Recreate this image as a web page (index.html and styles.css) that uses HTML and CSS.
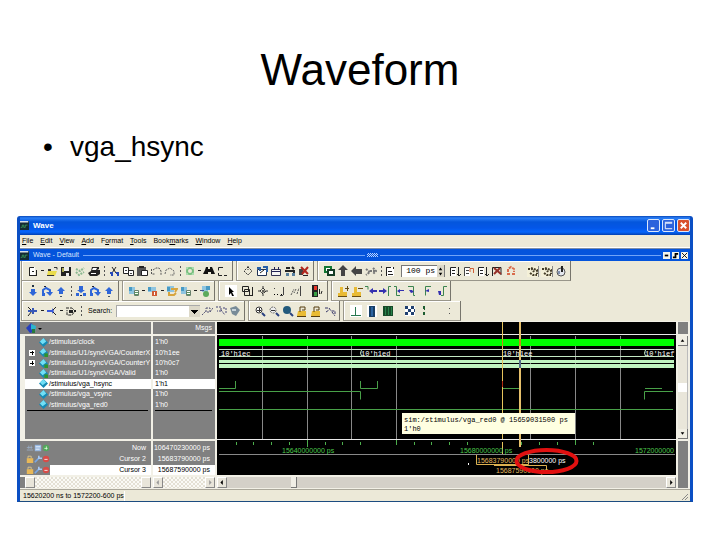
FILE: index.html
```html
<!DOCTYPE html>
<html lang="en">
<head>
<meta charset="utf-8">
<title>Waveform</title>
<link rel="stylesheet" href="styles.css">
</head>
<body>
<svg class="defs" aria-hidden="true">
<symbol id="new" viewBox="0 0 12 12"><path fill="#fff" d="M2 2h6v9H2z"/><path fill="none" stroke="#222" d="M2.500 11V2.500H7M9.500 5v6M3 10.500h6M5 6.500h2"/></symbol>
<symbol id="open" viewBox="0 0 12 12"><path fill="#eadc4c" d="M2 6h9l-2 5H1z"/><path fill="none" stroke="#333" d="M1 10.500h7M8 2.500h3v2"/><path fill="#333" d="M2 4h3v2H2z"/></symbol>
<symbol id="save" viewBox="0 0 12 12"><path fill="#222" d="M1 2h10v9H1z"/><path fill="#a8a850" d="M2 3h2v4H2z"/><path fill="#eee" d="M4 2h5v4H4zM6 8h3v3H6z"/></symbol>
<symbol id="reload" viewBox="0 0 12 12"><path fill="none" stroke="#8ab890" stroke-width="2" stroke-dasharray="2 1" d="M2 4l4 2 4-3M2 7l3 3 5-3"/></symbol>
<symbol id="print" viewBox="0 0 12 12"><path fill="#222" d="M4 2h7v2l-2 1h3v4l-3 2H2L0 8l3-2z"/><path fill="#fff" d="M5 3h4L8 5H4zM3 8h5v1H3z"/></symbol>
<symbol id="cut" viewBox="0 0 12 12"><path stroke="#222" d="M4 2l4 6M8 2L4 8"/><path fill="none" stroke="#2448b8" stroke-width="2" d="M2 8h2v3M8 8h2v3"/></symbol>
<symbol id="copy" viewBox="0 0 12 12"><path fill="#fff" stroke="#222" d="M1.500 2.500h5v6h-5zM6.500 5.500h5v5h-5z"/><path stroke="#444" d="M3 5.500h2M8 8.500h2"/></symbol>
<symbol id="paste" viewBox="0 0 12 12"><path fill="#555" d="M1 2h9v9H1z"/><path fill="#222" d="M3 1h5v2H3z"/><path fill="#fff" stroke="#222" d="M5.500 5.500h6v5h-6z"/></symbol>
<symbol id="undo" viewBox="0 0 12 12"><path fill="none" stroke="#555" stroke-dasharray="2 1" d="M1.500 4v5h4M3 5l3-2h3l2 3v4"/></symbol>
<symbol id="redo" viewBox="0 0 12 12"><path fill="none" stroke="#666" stroke-dasharray="2 1" d="M1 9l1-4 4-2 4 3v4H6"/></symbol>
<symbol id="ring" viewBox="0 0 12 12"><circle cx="6" cy="6" r="3" fill="none" stroke="#78c080" stroke-width="2"/><path fill="#aadcae" d="M2 2h2v2H2zM8 2h2v2H8zM2 8h2v2H2zM8 8h2v2H8z"/></symbol>
<symbol id="find" viewBox="0 0 12 12"><path fill="#111" d="M3 2h2v2h2V2h2l3 7H8V7H5v2H0l2-4z"/></symbol>
<symbol id="bracket" viewBox="0 0 12 12"><path fill="none" stroke="#222" d="M6 2.500H1.500v3M1.500 8v2.500H5M7 10.500h3"/></symbol>
<symbol id="cross" viewBox="0 0 12 12"><path fill="none" stroke="#333" stroke-dasharray="2 1" d="M6 2l4 4-4 4-4-4zM6 1v4"/></symbol>
<symbol id="wavedoc" viewBox="0 0 12 12"><path fill="#fff" stroke="#235" d="M1.500 4.500h9v6h-9z"/><path fill="none" stroke="#2860a8" stroke-width="2" d="M1 3h3v3M7 2h4v5"/><path stroke="#222" d="M4 8l4-3"/></symbol>
<symbol id="win" viewBox="0 0 12 12"><path fill="#f5f5f5" stroke="#335" d="M1.500 4.500h9v6h-9z"/><path stroke="#225" d="M2 6.500h8M4.500 2v3M8.500 2v3"/></symbol>
<symbol id="car" viewBox="0 0 12 12"><path fill="none" stroke="#222" stroke-width="2" d="M2 3h4M8 2l2 2M1 6h9v2"/><path fill="#577f9f" d="M2 8h3v3H2zM8 8h3v3H8z"/></symbol>
<symbol id="stopx" viewBox="0 0 12 12"><path fill="#444" d="M1 4h4v6H1z"/><path stroke="#b2271e" stroke-width="2" d="M3 2l7 7M10 2L4 9"/><path stroke="#222" d="M5 10.500h5"/></symbol>
<symbol id="pages" viewBox="0 0 12 12"><path fill="#fff" stroke="#173" stroke-width="2" d="M2 2h6v5H2z"/><path fill="#fff" stroke="#143c24" stroke-width="2" d="M5 5h6v5H5z"/></symbol>
<symbol id="up" viewBox="0 0 12 12"><path fill="#444" d="M6 0l5 5H8v6H4V5H1z"/></symbol>
<symbol id="left" viewBox="0 0 12 12"><path fill="#444" d="M0 6l5-5v3h6v5H5v2z"/></symbol>
<symbol id="right" viewBox="0 0 12 12"><path fill="none" stroke="#777" stroke-width="2" stroke-dasharray="2 1" d="M1 4l4 3-4 3M5 6h5M8 3l3 3-3 3"/></symbol>
<symbol id="step" viewBox="0 0 12 12"><path fill="#fff" d="M1 2h8v9H1z"/><path fill="none" stroke="#222" d="M1 2.500h5M1.500 3v8M3 6.500h4M3 9.500h5M8.500 2v2"/></symbol>
<symbol id="run" viewBox="0 0 12 12"><path fill="#fff" d="M1 2h6v9H1z"/><path fill="none" stroke="#222" d="M1.500 11V2.500H7M3 5.500h3M3 8.500h3M9.500 2v8M8 9l2 2 2-2"/></symbol>
<symbol id="runr" viewBox="0 0 12 12"><path fill="#fff" d="M1 2h6v9H1z"/><path fill="none" stroke="#444" d="M1.500 11V2.500H7M3 5.500h3M3 8.500h3"/><path fill="none" stroke="#d06038" d="M7 7V3.500h3.500V8"/></symbol>
<symbol id="runx" viewBox="0 0 12 12"><path fill="none" stroke="#222" d="M1.500 11V2.500H10V10"/><path stroke="#963028" stroke-width="2" d="M3 3l7 6M9 3L3 9"/></symbol>
<symbol id="redring" viewBox="0 0 12 12"><path fill="none" stroke="#d96c4c" stroke-width="2" stroke-dasharray="3 1" d="M3 7V4l3-2 3 2v3M2 9h3M7 9h3"/></symbol>
<symbol id="swirl" viewBox="0 0 12 12"><path fill="#f4f0d8" d="M0 1h12v11H0z"/><path fill="none" stroke="#443c28" stroke-width="2" stroke-dasharray="2 1" d="M1 4h4l2 3M4 3l6 2v4M3 8l3 2h4"/><path fill="none" stroke="#888" d="M11.500 1v11"/></symbol>
<symbol id="mouse" viewBox="0 0 12 12"><circle cx="6" cy="7" r="4" fill="#e5e8ef" stroke="#555"/><path fill="#222" d="M6 1h2v6H6z"/><path fill="#8090b0" d="M3 6h2v3H3z"/></symbol>
<symbol id="bdown" viewBox="0 0 12 12"><path fill="#2f66d8" d="M4 4h4v3h2l-4 4-4-4h2z"/><path fill="#234" d="M5 0h2v2H5z"/></symbol>
<symbol id="bover" viewBox="0 0 12 12"><path fill="none" stroke="#2f66d8" stroke-width="2" d="M2 8V5l3-2 4 2v3"/><path fill="#2f66d8" d="M5 7h7l-3 4zM1 8h3v3H1z"/><path fill="#223" d="M3 1h2v1H3z"/></symbol>
<symbol id="bup" viewBox="0 0 12 12"><path fill="#2f66d8" d="M6 2l4 4H8v3H4V6H2z"/><path fill="#456" d="M5 11h2v1H5z"/></symbol>
<symbol id="binto" viewBox="0 0 12 12"><path fill="#2f66d8" d="M4 1h4v4h2L6 8 2 5h2zM1 8h3v3H1zM8 8h3v3H8z"/><path fill="#223" d="M5 10h2v1H5z"/></symbol>
<symbol id="cube" viewBox="0 0 12 12"><path fill="#8fc5e0" d="M1 2h6v7H1z"/><path fill="#489ac4" d="M1 2h3v4H1z"/><path fill="#fff" stroke="#68806c" d="M6.500 5.500h4v5h-4z"/><path fill="#5a965e" d="M7 7h3v1H7zM7 9h3v1H7z"/></symbol>
<symbol id="cuber" viewBox="0 0 12 12"><path fill="#8fc5e0" d="M1 2h8v5H1z"/><path fill="#489ac4" d="M1 2h3v4H1z"/><path fill="#d05c34" d="M5 6h5v5H5z"/><path fill="#fff" d="M7 7h1v3H7z"/></symbol>
<symbol id="cubey" viewBox="0 0 12 12"><path fill="#8fc5e0" d="M1 1h7v6H1z"/><path fill="#489ac4" d="M1 2h3v4H1z"/><path fill="none" stroke="#d7a53d" stroke-width="2" d="M5 4h6L9 7M3 7v3h5l2-2"/></symbol>
<symbol id="cubeg" viewBox="0 0 12 12"><path fill="#8fc5e0" d="M3 1h6v6H3z"/><path fill="#489ac4" d="M7 1h4v4H7z"/><circle cx="7" cy="9" r="3" fill="#5caa5c"/><path stroke="#458" d="M1 5.500h4"/></symbol>
<symbol id="pointer" viewBox="0 0 12 12"><path fill="#fff" d="M0 0h12v12H0z"/><path d="M4 2l5 5H7l2 4H7L6 8l-2 2z"/></symbol>
<symbol id="boxes" viewBox="0 0 12 12"><path fill="none" stroke="#222" d="M1.500 1.500h6v5h-6zM3.500 4.500h5v6h-5zM11.500 2v9M8 10.500h3"/></symbol>
<symbol id="pan" viewBox="0 0 12 12"><path fill="none" stroke="#333" stroke-dasharray="3 1" d="M6 1v10M1 6h10M6 3l3 3-3 3-3-3z"/></symbol>
<symbol id="dots" viewBox="0 0 12 12"><path d="M1 9h1v1H1zM4 9h1v1H4zM8 9h1v1H8z"/><path stroke="#444" d="M1 3.500h1M10.500 2v8M7 10.500h3"/></symbol>
<symbol id="slash" viewBox="0 0 12 12"><path fill="none" stroke="#555" stroke-dasharray="2 1" d="M2 10l3-6M7 4L5 8M8 9l2-6"/><path stroke="#444" d="M11.500 1v10"/></symbol>
<symbol id="light" viewBox="0 0 12 12"><path fill="#222" d="M1 0h6v12H1z"/><path fill="#e5382c" d="M3 1h3v4H3z"/><path fill="#38a044" d="M3 7h3v4H3z"/><path fill="none" stroke="#222" d="M8.500 4v5M10 9l1-3"/></symbol>
<symbol id="addcur" viewBox="0 0 12 12"><path fill="#e9bb35" d="M3 2h3v5h4v4H1V8h2z"/><path stroke="#664c14" d="M8 3.500h4M10.500 1v5M1 11.500h9"/></symbol>
<symbol id="delcur" viewBox="0 0 12 12"><path fill="#e9bb35" d="M3 2h3v5h4v4H1V8h2z"/><path stroke="#664c14" d="M7 3.500h5M1 11.500h9"/></symbol>
<symbol id="prevt" viewBox="0 0 12 12"><path fill="none" stroke="#3c8450" d="M0 1.500h3v3"/><path fill="#3430b0" d="M4 6l4-3v2h4v2H8v2z"/></symbol>
<symbol id="nextt" viewBox="0 0 12 12"><path fill="none" stroke="#3c8450" d="M12 1.500H9.500V11"/><path fill="#3430b0" d="M0 5h4V3l4 3-4 3V7H0z"/></symbol>
<symbol id="prevf" viewBox="0 0 12 12"><path fill="none" stroke="#3c8450" d="M1 1.500h2.500v9H7"/><path fill="#3430b0" d="M4 6l3-2v1h4v1H7v2z"/></symbol>
<symbol id="nextf" viewBox="0 0 12 12"><path fill="none" stroke="#3c8450" d="M1 1.500h5.500v9H8"/><path fill="#3430b0" d="M2 5h3l2 2-3 1z"/></symbol>
<symbol id="prevr" viewBox="0 0 12 12"><path fill="none" stroke="#3c8450" d="M10 1.500H4.500v9"/><path fill="#3430b0" d="M4 6l4-2v3z"/></symbol>
<symbol id="nextr" viewBox="0 0 12 12"><path fill="none" stroke="#3c8450" d="M12 1.500H8.500v9H6"/><path fill="#3430b0" d="M3 6h3v4H4z"/></symbol>
<symbol id="merge" viewBox="0 0 12 12"><path fill="none" stroke="#222" d="M1 2l4 4-4 5"/><path fill="#3858b8" d="M1 5h9v2H1zM5 3h2v6H5z"/></symbol>
<symbol id="split" viewBox="0 0 12 12"><path fill="none" stroke="#222" d="M10 2L6 6l4 4"/><path fill="#3858d8" d="M1 5h5V3l2 3-2 3V7H1z"/></symbol>
<symbol id="node" viewBox="0 0 12 12"><path fill="none" stroke="#222" stroke-dasharray="3 1" d="M1 3h6l3 3-3 4H2V5"/><path fill="#222" d="M4 5h4v3H4zM9 5h2v2H9z"/></symbol>
<symbol id="sfind" viewBox="0 0 12 12"><path fill="none" stroke="#557" stroke-dasharray="2 1" d="M1 10l4-4M5 3h4v4H5zM9 7l3-4"/></symbol>
<symbol id="sfind2" viewBox="0 0 12 12"><path fill="none" stroke="#447" stroke-dasharray="2 1" d="M1 2h5v4H2M6 5l4 5M8 3h3v5"/></symbol>
<symbol id="filter" viewBox="0 0 12 12"><path fill="#788b98" d="M1 3l6-2 4 4-4 6-4-2z"/><path fill="#c7d3da" d="M3 4h4v2H3z"/></symbol>
<symbol id="zin" viewBox="0 0 12 12"><circle cx="5" cy="5" r="3" fill="#fff" stroke="#333"/><path stroke="#333" d="M3 5.500h4M5.500 3v4"/><path stroke="#2b4180" stroke-width="2" d="M8 8l3 3"/></symbol>
<symbol id="zout" viewBox="0 0 12 12"><circle cx="5" cy="5" r="3" fill="#eee" stroke="#666" stroke-dasharray="2 1"/><path stroke="#333" d="M3 5.500h4"/><path stroke="#2b4180" stroke-width="2" d="M8 8l3 3"/></symbol>
<symbol id="zfull" viewBox="0 0 12 12"><circle cx="5" cy="5" r="4" fill="#235a7c"/><path stroke="#2b4180" stroke-width="2" d="M8 8l3 3"/></symbol>
<symbol id="zcur" viewBox="0 0 12 12"><path fill="#e9bb35" d="M2 6h8v5H1z"/><path fill="none" stroke="#543c10" d="M4 7V2h5v3H6M1 11.500h9"/></symbol>
<symbol id="zother" viewBox="0 0 12 12"><path fill="none" stroke="#336" stroke-dasharray="3 1" d="M1 3h4l2 3h4v3M2 7l3-2M8 7l3 4"/></symbol>
<symbol id="edge" viewBox="0 0 12 12"><path fill="#fff" d="M0 0h12v12H0z"/><path stroke="#287850" d="M1 10.500h10M5.500 2v8"/></symbol>
<symbol id="bar" viewBox="0 0 12 12"><path fill="#fff" d="M1 0h10v12H1z"/><path fill="#173e66" d="M3 1h6v11H3z"/><path fill="#2b63a0" d="M5 2h2v9H5z"/></symbol>
<symbol id="greenbar" viewBox="0 0 12 12"><path fill="#164a28" d="M1 1h10v10H1z"/><path stroke="#28834a" d="M3.500 2v8M6.500 2v8M9.500 2v8"/></symbol>
<symbol id="check" viewBox="0 0 12 12"><path fill="#fff" d="M1 1h10v10H1z"/><path fill="#204070" d="M1 1h3v3H1zM7 1h3v3H7zM4 4h3v3H4zM10 4h1v3h-1zM1 7h3v3H1zM7 7h3v3H7z"/></symbol>
<symbol id="pair" viewBox="0 0 12 12"><path fill="#1c5c30" d="M3 1h2v3H3zM3 7h2v3H3zM4 4h1v1H4z"/></symbol>
<symbol id="colon" viewBox="0 0 12 12"><path fill="#555" d="M5 3h1v1H5zM5 8h1v1H5z"/></symbol>
<symbol id="gem" viewBox="0 0 10 10"><path fill="#168ab4" d="M5 0l5 5-5 5-5-5z"/><path fill="#72dff5" d="M5 0l3 4-4 3-3-3z"/></symbol>
<symbol id="gemg" viewBox="0 0 10 10"><path fill="#168ab4" d="M5 0l5 5-5 5-5-5z"/><path fill="#72dff5" d="M5 0l3 4-4 3-3-3z"/><path fill="#2f942c" d="M6 6h4v4H6z"/></symbol>
<symbol id="lock" viewBox="0 0 10 10"><path fill="#e8b858" d="M1 4h8v6H1z"/><path fill="none" stroke="#e6ce90" d="M2.500 4V1.500h4V4"/></symbol>
<symbol id="wrench" viewBox="0 0 10 10"><path stroke="#78a8e8" stroke-width="2" d="M1 9l6-6"/><path fill="#a8c8f4" d="M5 1h2v2h3v2H5z"/></symbol>
<symbol id="minus" viewBox="0 0 10 10"><circle cx="5" cy="5" r="4" fill="#d84c48"/><path stroke="#fff" d="M3 5.500h4"/></symbol>
<symbol id="app" viewBox="0 0 12 12"><path fill="#142b35" d="M0 0h12v12H0z"/><path fill="#d8e0e8" d="M0 0h11v2H0z"/><path fill="none" stroke="#3fa45b" d="M1 8.500h2v-3h2v3h2v-3h3"/></symbol>
</svg>

<main class="slide">
  <h1>Waveform</h1>
  <ul class="points"><li>vga_hsync</li></ul>

  <section class="window">
    <header class="titlebar">
      <svg class="app"><use href="#app"/></svg><span>Wave</span>
      <div class="winbtns">
        <button aria-label="Minimize"><svg viewBox="0 0 12 12"><path fill="#fff" d="M3 8h4v2H3z"/></svg></button>
        <button aria-label="Maximize"><svg viewBox="0 0 12 12"><path fill="none" stroke="#fff" d="M10 9.500H2.500v-6H10M2 2.500h8"/></svg></button>
        <button class="close" aria-label="Close"><svg viewBox="0 0 12 12"><path stroke="#fff" stroke-width="2" d="M3 3l6 6M9 3L3 9"/></svg></button>
      </div>
    </header>
    <nav class="menu">
      <button><u>F</u>ile</button><button><u>E</u>dit</button><button><u>V</u>iew</button><button><u>A</u>dd</button><button>F<u>o</u>rmat</button><button><u>T</u>ools</button><button>Book<u>m</u>arks</button><button><u>W</u>indow</button><button><u>H</u>elp</button>
    </nav>
    <div class="subtitle">
      <svg class="app"><use href="#app"/></svg><span>Wave - Default</span><i class="line"></i><i class="grip"></i><i class="line"></i>
      <button aria-label="Add"><svg viewBox="0 0 8 8"><path d="M2 3h4v2H2z"/></svg></button><button aria-label="Undock"><svg viewBox="0 0 8 8"><path d="M3 1h4v2H5v4H3zM1 5h2v2H1z"/></svg></button><button aria-label="Close pane"><svg viewBox="0 0 8 8"><path stroke="#000" d="M1 1l6 6M7 1L1 7"/></svg></button>
    </div>

    <div class="toolbars">
      <div class="bar">
        <div class="group"><button aria-label="New"><svg><use href="#new"/></svg></button><i class="dash"></i><button aria-label="Open"><svg><use href="#open"/></svg></button><button aria-label="Save"><svg><use href="#save"/></svg></button><button aria-label="Reload"><svg><use href="#reload"/></svg></button><button aria-label="Print"><svg><use href="#print"/></svg></button><i class="sep"></i><button aria-label="Cut"><svg><use href="#cut"/></svg></button><button aria-label="Copy"><svg><use href="#copy"/></svg></button><button aria-label="Paste"><svg><use href="#paste"/></svg></button><button aria-label="Undo"><svg><use href="#undo"/></svg></button><button aria-label="Redo"><svg><use href="#redo"/></svg></button><i class="sep"></i><button aria-label="Add"><svg><use href="#ring"/></svg></button><i class="dash"></i><button aria-label="Find"><svg><use href="#find"/></svg></button><button aria-label="Collapse"><svg><use href="#bracket"/></svg></button></div>
        <div class="group"><button aria-label="Compile"><svg><use href="#cross"/></svg></button><button aria-label="Compile all"><svg><use href="#wavedoc"/></svg></button><button aria-label="Simulate"><svg><use href="#win"/></svg></button><button aria-label="Drive"><svg><use href="#car"/></svg></button><button aria-label="Stop"><svg><use href="#stopx"/></svg></button></div>
        <div class="group"><button aria-label="Environment"><svg><use href="#pages"/></svg></button><button aria-label="Up"><svg><use href="#up"/></svg></button><button aria-label="Back"><svg><use href="#left"/></svg></button><button aria-label="Forward"><svg><use href="#right"/></svg></button><i class="sep"></i><button aria-label="Restart"><svg><use href="#step"/></svg></button><div class="length"><input type="text" value="100 ps" aria-label="Run length"><button aria-label="Change length"><svg viewBox="0 0 8 12"><path d="M2 5l2-3 2 3zM2 8h4l-2 3z"/></svg></button></div><button aria-label="Run"><svg><use href="#run"/></svg></button><button aria-label="Continue"><svg><use href="#runr"/></svg></button><button aria-label="Run all"><svg><use href="#run"/></svg></button><button aria-label="Break"><svg><use href="#runx"/></svg></button><button aria-label="Stop run"><svg><use href="#redring"/></svg></button><i class="space"></i><button aria-label="Profile"><svg><use href="#swirl"/></svg></button><button aria-label="Memory"><svg><use href="#swirl"/></svg></button><button aria-label="Mouse"><svg><use href="#mouse"/></svg></button></div>
      </div>
      <div class="bar">
        <div class="group"><button aria-label="Step"><svg><use href="#bdown"/></svg></button><button aria-label="Step over"><svg><use href="#bover"/></svg></button><button aria-label="Step out"><svg><use href="#bup"/></svg></button><i class="sep"></i><button aria-label="Step current"><svg><use href="#binto"/></svg></button><button aria-label="Step over current"><svg><use href="#bover"/></svg></button><button aria-label="Step out current"><svg><use href="#bup"/></svg></button></div>
        <div class="group"><button aria-label="Add wave"><svg><use href="#cube"/></svg></button><i class="dash"></i><button aria-label="Delete wave"><svg><use href="#cuber"/></svg></button><i class="dash"></i><button aria-label="Edit wave"><svg><use href="#cubey"/></svg></button><button aria-label="Export wave"><svg><use href="#cube"/></svg></button><i class="dash"></i><button aria-label="Refresh wave"><svg><use href="#cubeg"/></svg></button></div>
        <div class="group wide"><button aria-label="Select mode"><svg><use href="#pointer"/></svg></button><button aria-label="Zoom mode"><svg><use href="#boxes"/></svg></button><button aria-label="Pan mode"><svg><use href="#pan"/></svg></button><button aria-label="Two cursor mode"><svg><use href="#dots"/></svg></button><button aria-label="Edit mode"><svg><use href="#slash"/></svg></button><i class="sep blank"></i><button aria-label="Stop drawing"><svg><use href="#light"/></svg></button></div>
        <div class="group"><button aria-label="Insert cursor"><svg><use href="#addcur"/></svg></button><button aria-label="Delete cursor"><svg><use href="#delcur"/></svg></button><button aria-label="Previous transition"><svg><use href="#prevt"/></svg></button><button aria-label="Next transition"><svg><use href="#nextt"/></svg></button><button aria-label="Previous falling edge"><svg><use href="#prevf"/></svg></button><button aria-label="Next falling edge"><svg><use href="#nextf"/></svg></button><button aria-label="Previous rising edge"><svg><use href="#prevr"/></svg></button><button aria-label="Next rising edge"><svg><use href="#nextr"/></svg></button></div>
      </div>
      <div class="bar">
        <div class="group"><button aria-label="Merge"><svg><use href="#merge"/></svg></button><i class="dash"></i><button aria-label="Split"><svg><use href="#split"/></svg></button><i class="dash"></i><button aria-label="Node"><svg><use href="#node"/></svg></button><i class="sep"></i><label for="search">Search:</label><select id="search"><option></option></select><button aria-label="Search backward"><svg><use href="#sfind"/></svg></button><button aria-label="Search forward"><svg><use href="#sfind2"/></svg></button><button aria-label="Search options"><svg><use href="#filter"/></svg></button></div>
        <div class="group"><button aria-label="Zoom in"><svg><use href="#zin"/></svg></button><button aria-label="Zoom out"><svg><use href="#zout"/></svg></button><button aria-label="Zoom full"><svg><use href="#zfull"/></svg></button><button aria-label="Zoom to cursor"><svg><use href="#zcur"/></svg></button><button aria-label="Zoom between cursors"><svg><use href="#zcur"/></svg></button><button aria-label="Zoom other"><svg><use href="#zother"/></svg></button></div>
        <div class="group wide"><button aria-label="Edge"><svg><use href="#edge"/></svg></button><button aria-label="Blue bar"><svg><use href="#bar"/></svg></button><button aria-label="Green bar"><svg><use href="#greenbar"/></svg></button><i class="sep blank"></i><button aria-label="Pattern"><svg><use href="#check"/></svg></button><button aria-label="Marks"><svg><use href="#pair"/></svg></button><i class="space"></i><button aria-label="More"><svg><use href="#colon"/></svg></button></div>
      </div>
    </div>

    <div class="wave">
      <div class="head"><svg viewBox="0 0 18 12"><path fill="#263fbd" d="M1 6l5-5 3 3v6l-4 1z"/><path fill="#2bb5cf" d="M6 2l5 2-1 6-4-3z"/><path fill="#287a3c" d="M7 7h3v4H7z"/><path d="M13 6h4l-2 2z"/></svg></div>
      <div class="head msgs">Msgs</div>
      <svg class="plot" viewBox="217 321 459 153" preserveAspectRatio="none" role="img" aria-label="Signal waveforms">
        <path fill="#000" d="M217 321h459v153H217z"/>
        <path stroke="#888" d="M262.500 335v103M307.500 335v103M351.500 335v103M396.500 335v103M530.500 335v103M575.500 335v103M620.500 335v103"/>
        <path stroke="#e8e8e8" d="M217 333.500h459M217 438.500h459"/>
        <path stroke="#888" d="M219 453.500h456"/>
        <path fill="#0f0" d="M219 338h455v7H219z"/>
        <path fill="#c0f4c0" d="M219 359h455v3H219zM219 363h455v4H219z"/>
        <path stroke="#c4e8c4" d="M219 348.500h455M219 355.500h455"/>
        <g class="bus"><text x="221" y="355">10'h1ec</text><text x="361" y="355">10'h1ed</text><text x="503" y="355">10'h1ee</text><text x="645" y="355">10'h1ef</text></g>
        <path fill="none" stroke="#c4e8c4" d="M361.500 349l-1 3 1 3M645.500 349l-1 3 1 3"/>
        <path fill="none" stroke="#48a048" d="M219 387.500h16.500V380M219 390.500h141.500v8M360.500 380v7.500h17V380M502 387.500h18M645 387.500h17M673 390.500h-28.500v8M219 408.500h454"/>
        <path stroke="#e8c45c" d="M502.500 321v17M502.500 345v93M502.500 441v12"/>
        <path fill="#e6c06c" d="M519 321h2v125h-2z"/>
        <path fill="#c58a14" d="M502 338h1v7h-1zM519 338h2v7h-2z"/>
        <path fill="#b02a10" d="M502 380h1v6h-1z"/>
        <path fill="#546a88" d="M519 359h2v8h-2z"/>
        <path stroke="#4cae4c" d="M307.500 439v7M396.500 439v5M575.500 439v5M236.500 441v3M253.500 441v3M271.500 441v3M289.500 441v3M325.500 441v3M342.500 441v3M360.500 441v3M414.500 441v3M431.500 441v3M449.500 441v3M467.500 441v3M521.500 441v3M539.500 441v3M557.500 441v3M593.500 441v3"/>
        <g class="axis"><text x="282" y="452">15640000000 ps</text><text x="460" y="452">15680000000 ps</text><text x="635" y="452">1572000000</text></g>
        <path fill="none" stroke="#dcb050" d="M476.500 454v9.500h52V454M494 464.500h52.500v8"/>
        <path fill="#fff" d="M468 462h1v2h-1z"/>
        <g class="curs"><text x="477" y="462">15683790000 ps</text><text x="496" y="472">15687590000 ps</text><text class="delta" x="529" y="462">3800000 ps</text></g>
        <path fill="#ffffe1" d="M402 412h173v21H402z"/>
        <g class="tip"><text x="404" y="421">sim:/stimulus/vga_red0 @ 15659031500 ps</text><text x="404" y="430">1'h0</text></g>
        <ellipse cx="546.500" cy="460" rx="30" ry="11" fill="none" stroke="#e11010" stroke-width="4"/>
      </svg>
      <div class="head"></div>

      <div class="signals names">
        <div><i></i><svg><use href="#gem"/></svg>/stimulus/clock</div>
        <div><i class="plus"></i><svg><use href="#gemg"/></svg>/stimulus/U1/syncVGA/CounterX</div>
        <div><i class="plus"></i><svg><use href="#gemg"/></svg>/stimulus/U1/syncVGA/CounterY</div>
        <div><i></i><svg><use href="#gemg"/></svg>/stimulus/U1/syncVGA/Valid</div>
        <div class="hot"><i></i><svg><use href="#gem"/></svg>/stimulus/vga_hsync</div>
        <div><i></i><svg><use href="#gem"/></svg>/stimulus/vga_vsync</div>
        <div><i></i><svg><use href="#gem"/></svg>/stimulus/vga_red0</div>
      </div>
      <div class="signals values">
        <div>1'h0</div><div>10'h1ee</div><div>10'h0c7</div><div>1'h0</div><div class="hot">1'h1</div><div>1'h0</div><div>1'h0</div>
      </div>
      <div class="vscroll"><button aria-label="Scroll up"><svg viewBox="0 0 10 9"><path d="M3 6l2-3 2 3z"/></svg></button><i></i><button aria-label="Scroll down"><svg viewBox="0 0 10 9"><path d="M3 3h4L5 6z"/></svg></button></div>

      <div class="cursors icons">
        <div><svg viewBox="0 0 10 10"><path stroke="#9cb0c8" d="M1 4.500h7M1 7.500h8M3.500 2v4M6.500 2v4"/></svg><svg viewBox="0 0 10 10"><path fill="#98b8e0" d="M1 1h8v8H1z"/><path stroke="#fff" d="M2 3.500h6M2 6.500h5"/></svg><svg viewBox="0 0 10 10"><circle cx="5" cy="5" r="4" fill="#54a85c"/><path stroke="#dfd" d="M3 5.500h4M5.500 3v4"/></svg><span>Now</span></div>
        <div><svg><use href="#lock"/></svg><svg><use href="#wrench"/></svg><svg><use href="#minus"/></svg><span>Cursor 2</span></div>
        <div><svg><use href="#lock"/></svg><svg><use href="#wrench"/></svg><svg><use href="#minus"/></svg><span class="hot">Cursor 3</span></div>
      </div>
      <div class="cursors"><div><span>106470230000 ps</span></div><div><span>15683790000 ps</span></div><div><span class="hot">15687590000 ps</span></div></div>
      <div class="well"></div>

      <div class="hscroll inset"><button aria-label="Names left"></button><i></i><button aria-label="Names right"></button></div>
      <div class="hscroll"><button aria-label="Values left"><svg viewBox="0 0 10 10"><path fill="#999" d="M6 2v6L3 5z"/></svg></button><i></i><button aria-label="Values right"><svg viewBox="0 0 10 10"><path fill="#999" d="M4 2v6l3-3z"/></svg></button></div>
      <div class="hscroll time"><button aria-label="Earlier"><svg viewBox="0 0 10 10"><path d="M6 2v6L3 5z"/></svg></button><i></i><b></b><i></i><button aria-label="Later"><svg viewBox="0 0 10 10"><path d="M4 2v6l3-3z"/></svg></button></div>
    </div>

    <footer class="status"><span>15620200 ns to 1572200-600 ps</span><svg viewBox="0 0 10 10"><path stroke="#888" d="M2 9l6-6M5 9l3-3"/></svg></footer>
  </section>
</main>
</body>
</html>
```

FILE: styles.css
```css
* { box-sizing: border-box; }
body { margin: 0; background: #fff; color: #000; font-family: "Liberation Sans", Arial, sans-serif; }
button { margin: 0; padding: 0; border: 0; background: none; color: inherit; font: inherit; }
svg { display: block; flex: none; }
i { flex: none; }
.defs { position: absolute; width: 0; height: 0; }
h1 { margin: 0; padding-top: 48px; font-size: 44px; line-height: 44px; font-weight: 400; text-align: center; }
.points { margin: 39px 0 0; padding: 0 0 0 70px; font-size: 28px; line-height: 32px; list-style: none; }
.points li::before { content: "•"; float: left; margin-left: -27px; }

.window { margin: 53px 27px 0 17px; border: 3px solid #0a4fc4; border-top: 0; border-bottom: 1px solid #1c4c80; background: #ece9d8; font-size: 7px; line-height: 10px; border-radius: 3px 3px 0 0; }
.titlebar { display: flex; align-items: center; height: 19px; gap: 4px; color: #fff; font: 700 8px/10px "Liberation Sans", sans-serif; background: linear-gradient(#0a48b8, #2a80f8 2px, #0456dc 6px, #0456e8 12px, #0566fc 16px, #0340b0); }
.app { width: 9px; height: 9px; }
.winbtns { display: flex; gap: 2px; margin-left: auto; }
.winbtns button { width: 13px; height: 13px; border: 1px solid #dce8fc; border-radius: 2px; background: #2c62dc; }
.winbtns svg { width: 11px; height: 11px; }
.winbtns .close { background: #d8502c; }
.menu { display: flex; align-items: center; gap: 7px; height: 13px; padding-left: 2px; border-bottom: 1px solid #fff; }
.subtitle { display: flex; align-items: center; height: 13px; border-top: 1px solid #8090a8; padding-right: 2px; gap: 2px; background: #0454dc; color: #d8e4fc; }
.subtitle span { padding: 0 2px; }
.subtitle .line { flex: 1; height: 1px; background: #70a4f8; }
.grip { width: 11px; height: 4px; background: repeating-conic-gradient(#bcd4ff 0 25%, #0454dc 0 50%) 0 0 / 2px 2px; }
.subtitle button { width: 7px; height: 7px; background: #f4f4ec; }
.subtitle button svg { width: 7px; height: 7px; }

.toolbars { padding-left: 1px; }
.bar { display: flex; gap: 3px; height: 20px; }
.group { display: flex; align-items: center; padding: 0 2px 0 4px; border-left: 1px solid #99968a; border-right: 1px solid #77756c; border-bottom: 1px solid #99968a; box-shadow: inset 1px 1px #fff; }
.group > button { width: 14px; height: 12px; display: flex; justify-content: center; }
.group > button svg { width: 12px; height: 12px; }
.wide > button { width: 16px; }
.dash { width: 5px; height: 1px; border: solid transparent; border-width: 0 1px; background: #222; background-clip: content-box; }
.sep { width: 6px; height: 10px; background: repeating-linear-gradient(#555 0 2px, transparent 2px 4px) center / 1px 10px no-repeat; }
.sep.blank { background: none; }
.space { width: 8px; }
.length { display: flex; margin: 0 3px; height: 12px; }
.length input { width: 36px; padding: 0 2px; border: 1px solid #777; border-width: 1px 0 0 1px; background: #fff; font: 8px/10px "Liberation Mono", monospace; text-align: right; }
.length button { width: 8px; background: #dcd8c8; border-right: 1px solid #777; }
.length svg { width: 7px; height: 12px; }
.group label { width: 32px; padding: 0 4px; }
.group select { width: 84px; height: 12px; padding: 0; border: 1px solid #aaa; border-width: 1px 0 0 1px; border-radius: 0; appearance: none; background: linear-gradient(#000, #000) right 2px top 4px / 7px 1px no-repeat, linear-gradient(#000, #000) right 3px top 5px / 5px 1px no-repeat, linear-gradient(#000, #000) right 4px top 6px / 3px 1px no-repeat, linear-gradient(#000, #000) right 5px top 7px / 1px 1px no-repeat, linear-gradient(to left, #dcd8c8 11px, #fff 11px); }

.wave { display: grid; grid-template-columns: 131px 62px 1fr 10px; grid-template-rows: 12px 103px 34px 11px; gap: 2px; padding: 1px 2px 1px 0; background: #f2f0e6; color: #fff; }
.head, .well { background: #808080; }
.head svg { width: 18px; height: 12px; margin-left: 5px; }
.msgs { text-align: right; padding: 1px 3px; }
.plot { grid-row: 1 / 4; grid-column: 3; width: 100%; height: 153px; }
.signals { display: grid; grid-template-rows: repeat(7, 1fr); padding: 1px 0 28px; background: #808080; }
.signals > div { display: flex; align-items: center; padding-left: 2px; white-space: nowrap; }
.names { margin-left: 5px; }
.names i { width: 6px; height: 6px; margin: 0 4px 0 2px; }
.names .plus { background: linear-gradient(#000, #000) center / 4px 1px no-repeat, linear-gradient(#000, #000) center / 1px 4px no-repeat, #fff; }
.names svg { width: 9px; height: 9px; margin-right: 1px; }
.names::after, .values::after { content: ""; height: 1px; margin: 0 3px 0 2px; background: #000; }
.hot { background: #fff; color: #000; }
.vscroll { display: flex; flex-direction: column; justify-content: space-between; align-items: center; background: #e9e6da; border-right: 1px solid #bbb; }
.vscroll button { border-right: 1px solid #777; border-bottom: 1px solid #777; background: #f0eee4; }
.vscroll button svg { width: 9px; height: 9px; }
.vscroll i { width: 9px; height: 9px; background: #fff; }
.cursors { display: grid; grid-template-rows: repeat(3, 1fr); padding: 2px 0 0; background: #808080; }
.cursors > div { display: flex; align-items: center; }
.cursors span { flex: 1; padding-right: 5px; text-align: right; white-space: nowrap; }
.icons > div { padding-left: 6px; }
.icons svg { width: 8px; height: 8px; }
.well { grid-row: 3 / 5; grid-column: 4; }
.hscroll { display: flex; background: repeating-conic-gradient(#e4e0d4 0 25%, #fafaf6 0 50%) 0 0 / 4px 4px; }
.hscroll button { width: 10px; border: 1px solid #fff; border-right-color: #888; border-bottom-color: #888; background: #e8e5da; }
.hscroll svg { width: 8px; height: 9px; }
.hscroll i { flex: 1; }
.inset { border-left: 5px solid #808080; }
.time { background: #d4d0c8; }
.time i { flex: 368; }
.time i:first-of-type { flex: 64; }
.time b { width: 6px; background: #f0eee6; border-right: 1px solid #777; border-bottom: 1px solid #777; }

.bus, .tip { font: 7px "Liberation Mono", monospace; fill: #fff; }
.axis { font-size: 7px; fill: #4cc84c; }
.curs { font-size: 7px; fill: #e4bc60; }
.curs .delta { fill: #fff; }
.tip { fill: #000; }

.status { display: flex; justify-content: space-between; align-items: center; height: 12px; border-top: 1px solid #aaa79a; padding-left: 3px; }
.status span { width: 102px; border-right: 1px solid #fff; white-space: nowrap; }
.status svg { width: 10px; height: 10px; }
```
